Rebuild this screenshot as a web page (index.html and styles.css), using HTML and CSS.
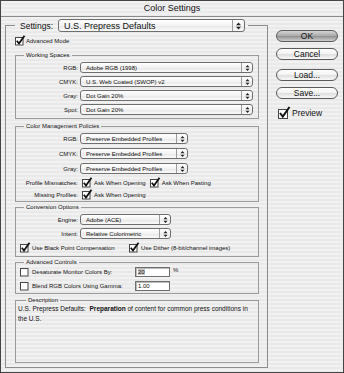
FILE: index.html
```html
<!DOCTYPE html>
<html lang="en">
<head>
    <title>Color Settings</title>
    <meta charset="UTF-8">
    <link rel="stylesheet" href="styles.css">
</head>
<body>
    <div class="window">
        <div class="titlebar">Color Settings</div>

        <div class="window-body">
            <fieldset class="settings-group">
                <legend class="settings-legend">
                    <span class="settings-label">Settings:</span>
                    <span class="popup popup-large">
                        <span class="popup-text">U.S. Prepress Defaults</span>
                        <span class="popup-arrows"><svg width="5" height="8" viewBox="0 0 5 8"><path d="M0 3.2 L2.5 0.5 L5 3.2Z M0 4.8 L2.5 7.5 L5 4.8Z" fill="#222"/></svg></span>
                    </span>
                </legend>

                <div class="check-row advanced-row">
                    <svg class="checkbox" width="11" height="11" viewBox="0 0 11 11"><rect x="0.5" y="2.5" width="7.5" height="7.5" fill="#fff" stroke="#444"/><path d="M1.8 5.8 L4 8.6 L9.5 0.8" fill="none" stroke="#111" stroke-width="1.8"/></svg>
                    <span>Advanced Mode</span>
                </div>

                <!-- Working Spaces -->
                <fieldset class="group working-group">
                    <legend>Working Spaces</legend>
                    <div class="field-row">
                        <span class="field-label">RGB:</span>
                        <span class="popup popup-wide">
                            <span class="popup-text">Adobe RGB (1998)</span>
                            <span class="popup-arrows"><svg width="5" height="8" viewBox="0 0 5 8"><path d="M0.5 3.2 L2.5 1 L4.5 3.2Z M0.5 4.8 L2.5 7 L4.5 4.8Z" fill="#222"/></svg></span>
                        </span>
                    </div>
                    <div class="field-row">
                        <span class="field-label">CMYK:</span>
                        <span class="popup popup-wide">
                            <span class="popup-text">U.S. Web Coated (SWOP) v2</span>
                            <span class="popup-arrows"><svg width="5" height="8" viewBox="0 0 5 8"><path d="M0.5 3.2 L2.5 1 L4.5 3.2Z M0.5 4.8 L2.5 7 L4.5 4.8Z" fill="#222"/></svg></span>
                        </span>
                    </div>
                    <div class="field-row">
                        <span class="field-label">Gray:</span>
                        <span class="popup popup-wide">
                            <span class="popup-text">Dot Gain 20%</span>
                            <span class="popup-arrows"><svg width="5" height="8" viewBox="0 0 5 8"><path d="M0.5 3.2 L2.5 1 L4.5 3.2Z M0.5 4.8 L2.5 7 L4.5 4.8Z" fill="#222"/></svg></span>
                        </span>
                    </div>
                    <div class="field-row">
                        <span class="field-label">Spot:</span>
                        <span class="popup popup-wide">
                            <span class="popup-text">Dot Gain 20%</span>
                            <span class="popup-arrows"><svg width="5" height="8" viewBox="0 0 5 8"><path d="M0.5 3.2 L2.5 1 L4.5 3.2Z M0.5 4.8 L2.5 7 L4.5 4.8Z" fill="#222"/></svg></span>
                        </span>
                    </div>
                </fieldset>

                <!-- Color Management Policies -->
                <fieldset class="group policies-group">
                    <legend>Color Management Policies</legend>
                    <div class="field-row">
                        <span class="field-label">RGB:</span>
                        <span class="popup popup-medium">
                            <span class="popup-text">Preserve Embedded Profiles</span>
                            <span class="popup-arrows"><svg width="5" height="8" viewBox="0 0 5 8"><path d="M0.5 3.2 L2.5 1 L4.5 3.2Z M0.5 4.8 L2.5 7 L4.5 4.8Z" fill="#222"/></svg></span>
                        </span>
                    </div>
                    <div class="field-row">
                        <span class="field-label">CMYK:</span>
                        <span class="popup popup-medium">
                            <span class="popup-text">Preserve Embedded Profiles</span>
                            <span class="popup-arrows"><svg width="5" height="8" viewBox="0 0 5 8"><path d="M0.5 3.2 L2.5 1 L4.5 3.2Z M0.5 4.8 L2.5 7 L4.5 4.8Z" fill="#222"/></svg></span>
                        </span>
                    </div>
                    <div class="field-row">
                        <span class="field-label">Gray:</span>
                        <span class="popup popup-medium">
                            <span class="popup-text">Preserve Embedded Profiles</span>
                            <span class="popup-arrows"><svg width="5" height="8" viewBox="0 0 5 8"><path d="M0.5 3.2 L2.5 1 L4.5 3.2Z M0.5 4.8 L2.5 7 L4.5 4.8Z" fill="#222"/></svg></span>
                        </span>
                    </div>
                    <div class="check-row check-field">
                        <span class="field-label">Profile Mismatches:</span>
                        <svg class="checkbox" width="11" height="11" viewBox="0 0 11 11"><rect x="0.5" y="2.5" width="7.5" height="7.5" fill="#fff" stroke="#444"/><path d="M1.8 5.8 L4 8.6 L9.5 0.8" fill="none" stroke="#111" stroke-width="1.8"/></svg>
                        <span class="check-text">Ask When Opening</span>
                        <svg class="checkbox" width="11" height="11" viewBox="0 0 11 11"><rect x="0.5" y="2.5" width="7.5" height="7.5" fill="#fff" stroke="#444"/><path d="M1.8 5.8 L4 8.6 L9.5 0.8" fill="none" stroke="#111" stroke-width="1.8"/></svg>
                        <span class="check-text">Ask When Pasting</span>
                    </div>
                    <div class="check-row check-field missing-row">
                        <span class="field-label">Missing Profiles:</span>
                        <svg class="checkbox" width="11" height="11" viewBox="0 0 11 11"><rect x="0.5" y="2.5" width="7.5" height="7.5" fill="#fff" stroke="#444"/><path d="M1.8 5.8 L4 8.6 L9.5 0.8" fill="none" stroke="#111" stroke-width="1.8"/></svg>
                        <span class="check-text">Ask When Opening</span>
                    </div>
                </fieldset>

                <!-- Conversion Options -->
                <fieldset class="group conversion-group">
                    <legend>Conversion Options</legend>
                    <div class="field-row">
                        <span class="field-label">Engine:</span>
                        <span class="popup popup-small">
                            <span class="popup-text">Adobe (ACE)</span>
                            <span class="popup-arrows"><svg width="5" height="8" viewBox="0 0 5 8"><path d="M0.5 3.2 L2.5 1 L4.5 3.2Z M0.5 4.8 L2.5 7 L4.5 4.8Z" fill="#222"/></svg></span>
                        </span>
                    </div>
                    <div class="field-row">
                        <span class="field-label">Intent:</span>
                        <span class="popup popup-small">
                            <span class="popup-text">Relative Colorimetric</span>
                            <span class="popup-arrows"><svg width="5" height="8" viewBox="0 0 5 8"><path d="M0.5 3.2 L2.5 1 L4.5 3.2Z M0.5 4.8 L2.5 7 L4.5 4.8Z" fill="#222"/></svg></span>
                        </span>
                    </div>
                    <div class="check-row option-row compensation-row">
                        <svg class="checkbox" width="11" height="11" viewBox="0 0 11 11"><rect x="0.5" y="2.5" width="7.5" height="7.5" fill="#fff" stroke="#444"/><path d="M1.8 5.8 L4 8.6 L9.5 0.8" fill="none" stroke="#111" stroke-width="1.8"/></svg>
                        <span class="check-text bpc-text">Use Black Point Compensation</span>
                        <svg class="checkbox" width="11" height="11" viewBox="0 0 11 11"><rect x="0.5" y="2.5" width="7.5" height="7.5" fill="#fff" stroke="#444"/><path d="M1.8 5.8 L4 8.6 L9.5 0.8" fill="none" stroke="#111" stroke-width="1.8"/></svg>
                        <span class="check-text">Use Dither (8-bit/channel images)</span>
                    </div>
                </fieldset>

                <!-- Advanced Controls -->
                <fieldset class="group advanced-group">
                    <legend>Advanced Controls</legend>
                    <div class="check-row option-row">
                        <svg class="checkbox" width="11" height="11" viewBox="0 0 11 11"><rect x="0.5" y="2.5" width="7.5" height="7.5" fill="#fff" stroke="#444"/></svg>
                        <span class="check-text control-text">Desaturate Monitor Colors By:</span>
                        <span class="text-input"><span class="selected">20</span></span>
                        <span class="unit">%</span>
                    </div>
                    <div class="check-row option-row">
                        <svg class="checkbox" width="11" height="11" viewBox="0 0 11 11"><rect x="0.5" y="2.5" width="7.5" height="7.5" fill="#fff" stroke="#444"/></svg>
                        <span class="check-text control-text">Blend RGB Colors Using Gamma:</span>
                        <span class="text-input">1.00</span>
                    </div>
                </fieldset>

                <!-- Description -->
                <fieldset class="group description-group">
                    <legend>Description</legend>
                    <p class="description">U.S. Prepress Defaults:&nbsp; <b>Preparation</b> of content for common press conditions in<br>the U.S.</p>
                </fieldset>
            </fieldset>

            <div class="side">
                <div class="button default-button">OK</div>
                <div class="button">Cancel</div>
                <div class="button load-button">Load...</div>
                <div class="button">Save...</div>
                <div class="check-row preview-row">
                    <svg class="checkbox" width="13" height="13" viewBox="0 0 13 13"><rect x="0.5" y="3.5" width="9" height="9" fill="#fff" stroke="#444"/><path d="M2 7 L4.8 10.6 L11.5 1" fill="none" stroke="#111" stroke-width="2"/></svg>
                    <span>Preview</span>
                </div>
            </div>
        </div>
    </div>
</body>
</html>
```

FILE: styles.css
```css
* {
    margin: 0;
    padding: 0;
    box-sizing: border-box;
}

body {
    background: #fff;
    font-family: "Liberation Sans", Arial, sans-serif;
    color: #111;
}

.window {
    width: 344px;
    height: 373px;
    display: flex;
    flex-direction: column;
    border: 1px solid #444;
    background: repeating-linear-gradient(to bottom, #f1f1f1 0, #f1f1f1 2px, #e9e9e9 2px, #e9e9e9 4px);
}

.titlebar {
    height: 16px;
    line-height: 15px;
    text-align: center;
    font-size: 9px;
    border-bottom: 1px solid #8a8a8a;
}

.window-body {
    flex: 1;
    display: flex;
    padding: 2px 0 4px 4px;
}

/* Group boxes */
fieldset {
    border: 1px solid #9a9a9a;
    min-width: 0;
}

.settings-group {
    width: 263px;
    display: flex;
    flex-direction: column;
    padding: 4px 8px 4px 9px;
    border-color: #8c8c8c;
}

.settings-legend {
    display: flex;
    align-items: center;
    height: 13px;
    padding: 0 3px 0 5px;
}

.settings-label {
    font-size: 8.5px;
    margin-right: 5px;
}

.group {
    display: flex;
    flex-direction: column;
    gap: 3px;
    padding: 3px 5px 3px 0;
    margin-top: 1px;
}

.group legend {
    font-size: 6px;
    line-height: 8px;
    height: 8px;
    padding: 0 2px;
    margin-left: 8px;
}

.working-group {
    margin-top: 5px;
}

.policies-group {
    margin-top: 3px;
    gap: 4px;
    padding-bottom: 1px;
}

.conversion-group {
    padding-bottom: 3px;
}

.compensation-row {
    margin-top: 1px;
}

.advanced-group {
    padding-top: 1px;
    padding-bottom: 2px;
    gap: 4px;
}

.description-group {
    flex: 1;
    margin-top: 2px;
    padding: 0 4px 0 2px;
}

/* Rows */
.field-row {
    display: flex;
    align-items: center;
    height: 11px;
    font-size: 6px;
}

.field-label {
    width: 62px;
    margin-right: 2px;
    text-align: right;
    flex-shrink: 0;
}

.check-field .field-label {
    margin-right: 4px;
}

.missing-row {
    margin-top: -2px;
}

.check-row {
    display: flex;
    align-items: center;
    height: 10px;
    font-size: 6px;
}

.checkbox {
    flex-shrink: 0;
    margin-top: -2px;
}

.check-text {
    margin: 0 4px 0 1px;
}

.option-row {
    padding-left: 4px;
}

.bpc-text {
    width: 93px;
}

.control-text {
    width: 99px;
}

/* Popup menus */
.popup {
    display: flex;
    align-items: center;
    height: 11px;
    border: 1px solid #6e6e6e;
    border-radius: 3px;
    background: linear-gradient(to bottom, #ffffff, #f3f3f3 50%, #e6e6e6 51%, #fbfbfb);
    overflow: hidden;
}

.popup-text {
    flex: 1;
    padding-left: 5px;
    white-space: nowrap;
}

.popup-arrows {
    width: 11px;
    height: 100%;
    display: flex;
    align-items: center;
    justify-content: center;
    border-left: 1px solid #9c9c9c;
}

.popup-large {
    width: 187px;
    height: 13px;
    font-size: 9px;
}

.popup-large .popup-arrows {
    width: 12px;
}

.popup-wide {
    width: 173px;
}

.popup-medium {
    width: 108px;
}

.popup-small {
    width: 91px;
}

/* Text inputs */
.text-input {
    width: 35px;
    height: 10px;
    line-height: 8px;
    border: 1px solid #6e6e6e;
    background: #fff;
    padding-left: 2px;
    box-shadow: inset 1px 1px 0 #bbb;
}

.selected {
    background: #c8c8c8;
}

.unit {
    margin-left: 3px;
    align-self: flex-start;
}

.description {
    font-size: 6.5px;
    line-height: 9.5px;
}

/* Side buttons */
.side {
    width: 62px;
    margin-left: 8px;
    padding-top: 11px;
    display: flex;
    flex-direction: column;
    gap: 6px;
}

.button {
    height: 12px;
    line-height: 10px;
    text-align: center;
    font-size: 8.5px;
    border: 1px solid #5a5a5a;
    border-radius: 7px;
    background: linear-gradient(to bottom, #ffffff, #f2f2f2 50%, #dedede 51%, #f8f8f8);
}

.default-button {
    background: linear-gradient(to bottom, #d6d6d6, #a8a8a8 50%, #8f8f8f 51%, #cfcfcf);
}

.load-button {
    margin-top: 3px;
}

.preview-row {
    height: 12px;
    margin-top: 2px;
    font-size: 8.5px;
    padding-left: 2px;
    gap: 1px;
}
```
